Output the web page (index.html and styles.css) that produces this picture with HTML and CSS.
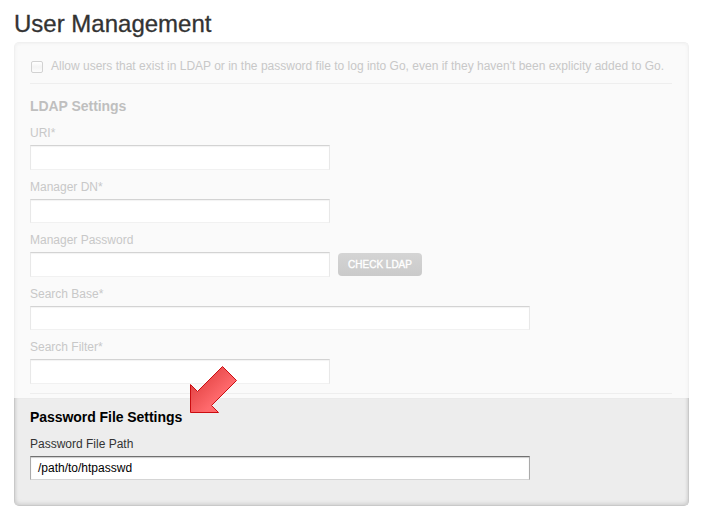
FILE: index.html
```html
<!DOCTYPE html>
<html lang="en">
<head>
<meta charset="utf-8">
<title>User Management</title>
<link rel="stylesheet" href="styles.css">
</head>
<body>
<h1>User Management</h1>
<main class="panel">
  <section class="ldap">
    <label class="allow"><span class="checkbox"></span><span class="allow-text">Allow users that exist in LDAP or in the password file to log into Go, even if they haven't been explicity added to Go.</span></label>
    <h2>LDAP Settings</h2>
    <div class="field"><label>URI*</label><div class="input"></div></div>
    <div class="field"><label>Manager DN*</label><div class="input"></div></div>
    <div class="field"><label>Manager Password</label><div class="row"><div class="input"></div><button>CHECK LDAP</button></div></div>
    <div class="field"><label>Search Base*</label><div class="input wide"></div></div>
    <div class="field last"><label>Search Filter*</label><div class="input"></div></div>
    <div class="rule"></div>
  </section>
  <section class="file">
    <h2>Password File Settings</h2>
    <div class="field"><label>Password File Path</label><div class="input wide">/path/to/htpasswd</div></div>
  </section>
  <svg class="arrow" width="50" height="50" viewBox="0 0 50 50">
    <defs><linearGradient id="red" x1="0" y1="0" x2="1" y2="1"><stop offset=".2" stop-color="#e34444"/><stop offset=".65" stop-color="#ff6a6d"/></linearGradient></defs>
    <path d="M1.5 19.5 8.5 26.5 33.5 1.5 47.5 15.5 22.5 40.5 29.5 47.5H1.5Z" fill="url(#red)" stroke="#cb0c10"/>
  </svg>
</main>
</body>
</html>
```
FILE: styles.css
```css
* { box-sizing: border-box; }
body {
  margin: 0;
  padding: 6px 12px 0 14px;
  background: #fff;
  font-family: "Liberation Sans", Arial, sans-serif;
  font-size: 12px;
}
h1 {
  margin: 0;
  height: 36px;
  line-height: 36px;
  font-size: 24px;
  font-weight: 400;
  -webkit-text-stroke: 0.3px #333;
  color: #333;
}
.panel { position: relative; width: 675px; }
.ldap {
  height: 356px;
  padding: 0 16px 0 15px;
  border: 1px solid #f0f0f0;
  border-bottom: 0;
  border-radius: 5px 5px 0 0;
  background: #fafafa;
  box-shadow: inset 0 2px 3px -1px #f2f2f2, inset 3px 0 3px -2px #f4f4f4, inset -3px 0 3px -2px #f4f4f4;
  color: #c8c8c8;
}
.allow {
  display: flex;
  height: 41px;
  padding-top: 15px;
  border-bottom: 1px solid #eee;
  line-height: 16px;
}
.checkbox {
  width: 12px;
  height: 12px;
  margin: 3px 8px 0 1px;
  border: 1px solid #d2d2d2;
  border-radius: 2px;
  background: linear-gradient(#fff, #f4f4f4 50%, #fdfdfd);
}
.allow-text { white-space: nowrap; }
h2 {
  margin: 0;
  height: 41px;
  padding-top: 3px;
  line-height: 38px;
  font-size: 14px;
  letter-spacing: -0.05px;
}
.ldap h2 { color: #bfbfbf; }
.field { margin-bottom: 9px; }
.field label { display: block; height: 20px; line-height: 16px; }
.field.last { margin-bottom: 9.5px; }
.input {
  width: 300px;
  height: 24.5px;
  border: 1px solid #e8e8e8;
  border-top-color: #d3d3d3;
  border-bottom-color: #f1f1f1;
  background: #fff;
  box-shadow: inset 0 1px 1px #f3f3f3;
}
.wide { width: 500px; }
.row { display: flex; gap: 8px; }
button {
  width: 84px;
  height: 23px;
  margin-top: 1px;
  padding: 0;
  border: 0;
  border-radius: 4px;
  background: linear-gradient(#d4d4d4, #cacaca);
  font: 10px "Liberation Sans", Arial, sans-serif;
  -webkit-text-stroke: 0.35px #fff;
  color: #fff;
}
.rule { height: 1px; background: #eee; }
.file {
  height: 108px;
  padding: 0 15px;
  border: 1px solid #c9c9c9;
  border-top: 0;
  border-radius: 0 0 5px 5px;
  background: #ededed;
  box-shadow: inset 0 -2px 4px -1px #ccc, inset 3px 0 3px -2px #d8d8d8, inset -3px 0 3px -2px #d8d8d8;
  color: #333;
}
.file h2 { height: 38px; padding: 0; color: #000; }
.file .input {
  height: 24px;
  padding-left: 7px;
  border-color: #707070 #aaa #d5d5d5;
  box-shadow: inset 0 1px 1px #ccc;
  line-height: 22px;
  color: #000;
}
.arrow { position: absolute; left: 175px; top: 323px; }
```
